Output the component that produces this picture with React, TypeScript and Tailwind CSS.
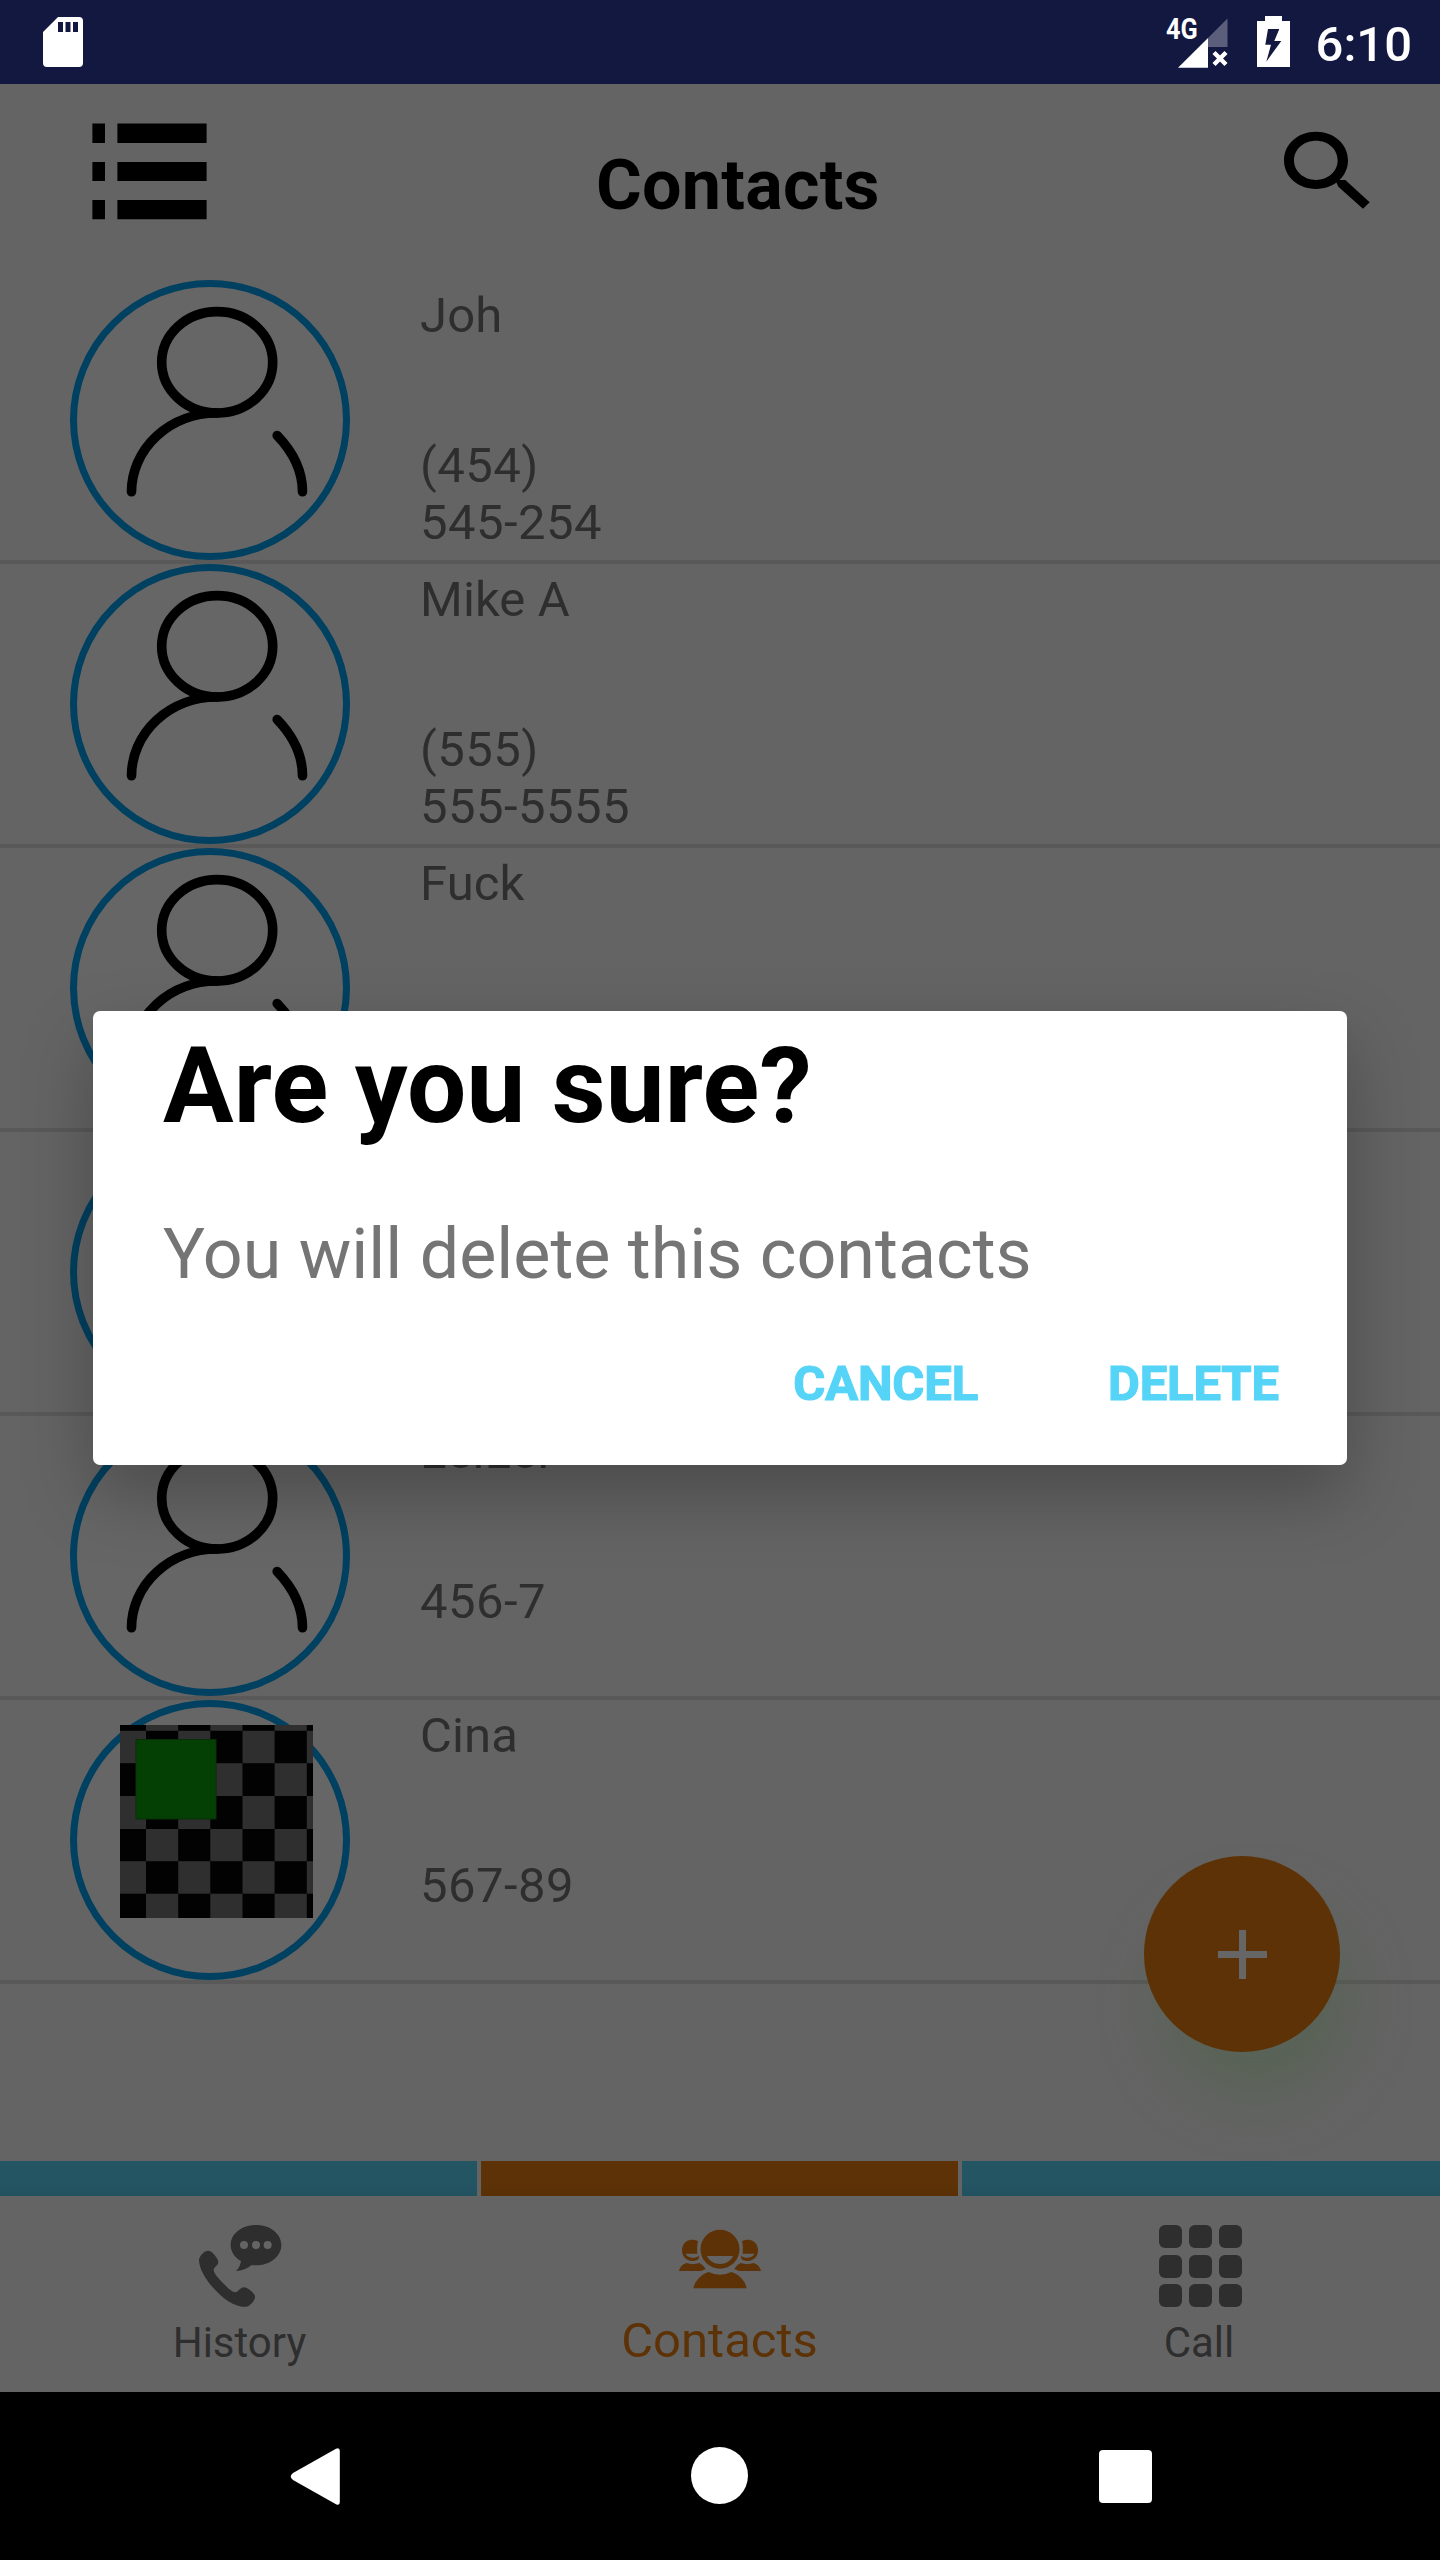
import React from "react";

type Contact = { name: string; phone: string[]; photo?: boolean };

const contacts: Contact[] = [
  { name: "Joh", phone: ["(454)", "545-254"] },
  { name: "Mike A", phone: ["(555)", "555-5555"] },
  { name: "Fuck", phone: [] },
  { name: "", phone: [] },
  { name: "LeiLei", phone: ["456-7"] },
  { name: "Cina", phone: ["567-89"], photo: true },
];

function StatusBar() {
  return (
    <div className="flex h-[84px] shrink-0 items-start bg-[#131840] text-white">
      <svg className="ml-[43px] mt-[17px] h-[50px] w-[40px]" viewBox="0 0 40 50">
        <path
          fill="currentColor"
          fillRule="evenodd"
          d="M15 0H36a4 4 0 0 1 4 4V46a4 4 0 0 1-4 4H4a4 4 0 0 1-4-4V15ZM15 5V15H20V5ZM22.5 5V15H27.5V5ZM30 5V15H35V5Z"
        />
      </svg>
      <div className="ml-auto mt-[12px] w-[30px] origin-left scale-x-[0.87] text-[29px] font-bold leading-[34px]">4G</div>
      <svg className="-ml-[18px] mt-[17px] h-[52px] w-[50px]" viewBox="0 0 50 52">
        <path fill="#5c5f7b" d="M30 21 49.5 1.5V30H30Z" />
        <path fill="currentColor" d="M0 50.700 30 21V50.700Z" />
        <path d="M36 35.500 48 47.500M48 35.500 36 47.500" stroke="currentColor" strokeWidth="4.400" fill="none" />
      </svg>
      <svg className="ml-[29px] mt-[16px] h-[51px] w-[33px]" viewBox="0 0 33 51">
        <path
          fill="currentColor"
          fillRule="evenodd"
          d="M8 0H25V5H33V51H0V5H8ZM11 13 8.300 28.700H14L9.300 45.700 24.300 25H17.300L22.300 13Z"
        />
      </svg>
      <div className="ml-[26px] mr-[28px] mt-[16px] text-[49px] font-medium leading-[57px]">6:10</div>
    </div>
  );
}

function Header() {
  return (
    <div className="flex h-[196px] shrink-0 items-start pl-[92px] pr-[70px]">
      <svg className="mt-[39px] h-[97px] w-[115px]" viewBox="0 0 115 97">
        <path d="M.4.400H13V20H.400ZM25.400.400H114.600V20H25.400ZM.4 39H13V58H.400ZM25.400 39H114.600V58H25.400ZM.4 77H13V96.200H.400ZM25.400 77H114.600V96.200H25.400Z" />
      </svg>
      <h1 className="ml-[389px] mt-[60px] text-[70px] font-bold leading-[82px] tracking-[0.25px] text-black">Contacts</h1>
      <svg className="ml-auto mt-[46px] h-[80px] w-[86px]" viewBox="963 390 258 240">
        <g transform="translate(-8 0)">
          <path
            fillRule="evenodd"
            d="M1067 395C1121 395 1163 432 1163 481S1121 567 1067 567 971 530 971 481 1013 395 1067 395ZM1067 422C1030 422 1001 448 1001 481S1030 540 1067 540 1132 514 1132 481 1104 422 1067 422Z"
          />
          <path d="M1125 540H1155L1228 607 1208 626 1134 560Z" />
        </g>
      </svg>
    </div>
  );
}

function Avatar({ photo }: { photo?: boolean }) {
  return (
    <svg className="h-[280px] w-[280px]" viewBox="0 0 280 280">
      <circle cx="140" cy="140" r="136.500" fill="#666666" stroke="#004060" strokeWidth="7" />
      {photo ? (
        <Photo />
      ) : (
        <g fill="none" stroke="#000" strokeWidth="9.600" strokeLinecap="round">
          <ellipse cx="147.200" cy="82.300" rx="55.500" ry="50.700" />
          <path d="M147.200 133A85.500 79 0 0 0 61.500 211.800" />
          <path d="M207.200 155.500C224 173 232.500 192 232.500 211.800" />
        </g>
      )}
    </svg>
  );
}

function Photo() {
  const xs = [50, 76, 108.200, 140.300, 172.500, 204.600, 236.800, 243];
  const ys = [25, 30.800, 63.200, 96, 129, 161.200, 193.700, 218];
  return (
    <g>
      <rect x="50" y="25" width="193" height="193" fill="#020202" />
      {ys.slice(0, -1).map((y, r) =>
        xs
          .slice(0, -1)
          .map((x, c) =>
            (r + c) % 2 ? (
              <rect key={`${r}-${c}`} x={x} y={y} width={xs[c + 1] - x} height={ys[r + 1] - y} fill="#2f2f2f" />
            ) : null,
          ),
      )}
      <rect x="66" y="39.500" width="80" height="79.500" fill="#044004" stroke="#0b2c0b" strokeWidth="1" />
    </g>
  );
}

function ContactRow({ name, phone, photo }: Contact) {
  return (
    <div className="flex h-[284px] shrink-0 border-b-4 border-[#595959] pl-[70px]">
      <Avatar photo={photo} />
      <div className="ml-[70px] flex flex-col pt-[7px] text-[49px] leading-[57px] text-[#2e2e2e]">
        <div className="h-[150px] tracking-[0.1px]">{name}</div>
        {phone.map((line) => (
          <div key={line} className="tracking-[0.45px]">
            {line}
          </div>
        ))}
      </div>
    </div>
  );
}

function HistoryIcon() {
  return (
    <svg className="h-[84px] w-[84px]" viewBox="174 252 252 252" fill="currentColor">
      <path d="M194 335C205 330 213 333 219 340 228 350 235 359 235 367 234 377 223 380 221 389 221 398 231 410 246 426 262 443 274 455 286 457 294 457 300 443 311 442 322 442 341 456 345 469 346 481 330 498 320 500 298 503 268 490 240 464 210 437 176 393 177 358 179 349 187 340 194 335Z" />
      <path
        fillRule="evenodd"
        d="M348 255C390 255 424 281 424 315S390 376 348 376Q341 376 335 375C321 386 307 392 288 393Q300 382 303 363C284 353 272 335 272 315 272 281 306 255 348 255ZM324 315A12 12 0 1 0 300 315 12 12 0 1 0 324 315ZM360 315A12 12 0 1 0 336 315 12 12 0 1 0 360 315ZM395 315A12 12 0 1 0 371 315 12 12 0 1 0 395 315Z"
      />
    </svg>
  );
}

function PeopleIcon() {
  const side = (
    <>
      <path
        fillRule="evenodd"
        d="M414 304C388 291 366 308 366 331 366 360 396 371 416 357L417 347C410 352 402 354 396 353 387 352 379 347 377 341H412C411 328 411 315 414 304Z"
      />
      <path d="M357 393C359 382 367 373 379 369Q398 376 418 369C427 373 434 380 437 388Q428 390 424 393Z" />
    </>
  );
  return (
    <svg className="h-[84px] w-[84px]" viewBox="354 252 252 252" fill="currentColor">
      {side}
      <g transform="translate(960 0) scale(-1 1)">{side}</g>
      <path
        fillRule="evenodd"
        d="M480 269A58.500 58.500 0 1 1 480 386 58.500 58.500 0 1 1 480 269ZM441 348C448 364 463 372 480 372S512 364 519 348Z"
      />
      <path d="M400 445C405 422 424 402 446 396Q480 413 514 396C536 402 556 422 560 445Z" />
    </svg>
  );
}

function KeypadIcon() {
  return (
    <div className="grid h-[84px] w-[84px] grid-cols-3 gap-[6.500px] p-[1px] pr-0">
      {Array.from({ length: 9 }, (_, i) => (
        <div key={i} className="rounded-[6px] bg-[#2e2e2e]" />
      ))}
    </div>
  );
}

function TabBar() {
  return (
    <div className="shrink-0">
      <div className="flex h-[35px] gap-1">
        <div className="w-[477px] bg-linear-to-b from-[#245563] from-60% to-[#225160]" />
        <div className="w-[477px] bg-linear-to-b from-[#5d3206] from-60% to-[#593006]" />
        <div className="flex-1 bg-linear-to-b from-[#245563] from-60% to-[#225160]" />
      </div>
      <div className="grid h-[196px] grid-cols-3 pt-[28px] text-[42px] leading-[50px] text-[#2e2e2e]">
        <div className="flex flex-col items-center">
          <HistoryIcon />
          <span className="mr-px mt-[9.500px]">History</span>
        </div>
        <div className="flex flex-col items-center text-[#5d3206]">
          <PeopleIcon />
          <span className="mr-px mt-[8px] text-[49px]">Contacts</span>
        </div>
        <div className="flex flex-col items-center">
          <KeypadIcon />
          <span className="mr-[2px] mt-[9.500px]">Call</span>
        </div>
      </div>
    </div>
  );
}

function SystemNav() {
  return (
    <div className="flex h-[168px] shrink-0 items-start bg-black pt-[54px]">
      <svg className="ml-[290px] h-[60px] w-[50px]" viewBox="0 0 50 60" fill="#fff">
        <path d="M46 2.800Q49.800 1.300 49.800 5V56Q49.800 60 46 58.200L3 34Q-1.500 30.500 3 27Z" />
      </svg>
      <div className="ml-[351px] mt-px h-[57px] w-[57px] rounded-full bg-white" />
      <div className="ml-[351px] mt-[4px] h-[53px] w-[53px] rounded-[4px] bg-white" />
    </div>
  );
}

function Dialog() {
  return (
    <div className="absolute left-[93px] top-[1011px] h-[454px] w-[1254px] rounded-[7px] bg-white px-[70px] pt-[14px] shadow-[0_30px_70px_rgba(0,0,0,0.26)]">
      <h2 className="text-[105px] font-bold leading-[124px] tracking-[0.2px] text-black">Are you sure?</h2>
      <p className="mt-[64px] text-[70px] leading-[82px] text-[#757575]">You will delete this contacts</p>
      <div className="-mr-[2px] mt-[60px] flex justify-end gap-[130px] text-[49px] font-bold leading-[57px] tracking-[-0.15px] text-[#55d4f7] [-webkit-text-stroke:1.2px_#55d4f7]">
        <button className="block">CANCEL</button>
        <button className="block">DELETE</button>
      </div>
    </div>
  );
}

export default function App() {
  return (
    <div className="relative flex h-[2560px] w-[1440px] flex-col overflow-hidden bg-[#646464] font-['Roboto',sans-serif]">
      <StatusBar />
      <Header />
      <div className="flex flex-1 flex-col overflow-hidden">
        {contacts.map((c, i) => (
          <ContactRow key={i} {...c} />
        ))}
      </div>
      <TabBar />
      <SystemNav />
      <div className="absolute left-[1144px] top-[1856px] flex size-[196px] items-center justify-center rounded-full bg-[#5d3206] shadow-[13px_48px_60px_-2px_rgba(72,98,64,0.38)]">
        <svg className="size-[49px]" viewBox="0 0 49 49">
          <path d="M21 0H28V21H49V28H28V49H21V28H0V21H21Z" fill="#666666" />
        </svg>
      </div>
      <Dialog />
    </div>
  );
}
